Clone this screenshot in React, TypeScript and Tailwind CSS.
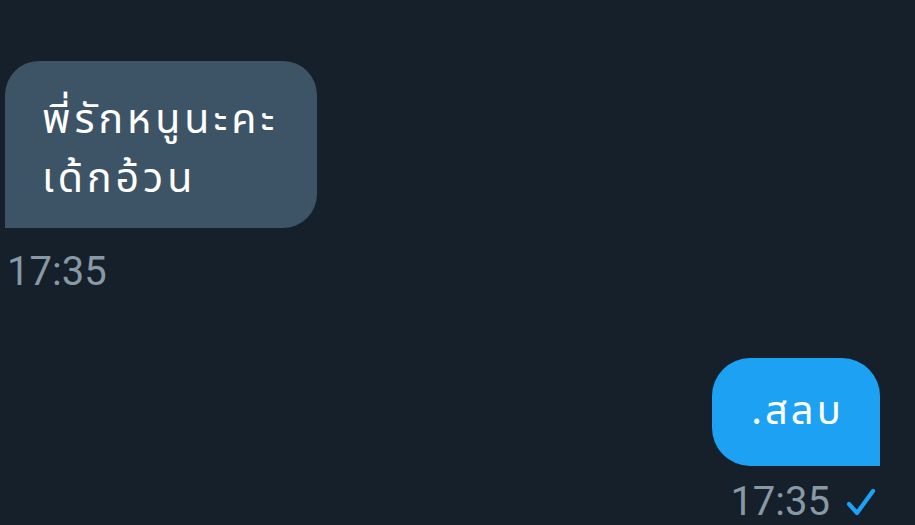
export default function App() {
  return (
    <div
      className="w-[915px] h-[525px] overflow-hidden bg-[#15202b] flex flex-col"
      style={{ fontFamily: '"Noto Sans Thai", "Noto Sans", Roboto, sans-serif' }}
    >
      <div className="flex flex-col items-start pl-[5px] pt-[61px]">
        <div className="w-[312px] h-[167px] bg-[#3d5466] rounded-t-[34px] rounded-br-[34px] rounded-bl-none pl-[37px] pt-[30px] text-white text-[41px] leading-[59px] tracking-[4px]">
          <div>พี่รักหนูนะคะ</div>
          <div>เด้กอ้วน</div>
        </div>
        <div className="mt-[20px] pl-[2px] text-[40px] leading-[48px] text-[#8899a6]" style={{ fontFamily: 'Roboto, sans-serif' }}>
          17:35
        </div>
      </div>

      <div className="flex flex-col items-end pr-[35px] mt-[62px]">
        <div className="w-[168px] h-[108px] bg-[#1da1f2] rounded-t-[38px] rounded-bl-[38px] rounded-br-none flex items-center justify-center text-white text-[40px] tracking-[3px]">
          <span className="pl-[3px]">.สลบ</span>
        </div>
        <div className="mt-[18px] flex items-center gap-[16px] mr-[4px]">
          <span className="text-[40px] leading-[36px] text-[#8899a6]" style={{ fontFamily: 'Roboto, sans-serif' }}>
            17:35
          </span>
          <svg width="30" height="28" viewBox="0 0 30 28" fill="none">
            <path d="M3 16 L11 25 L27 3" stroke="#1da1f2" strokeWidth="4.2" strokeLinecap="round" strokeLinejoin="round" />
          </svg>
        </div>
      </div>
    </div>
  );
}
